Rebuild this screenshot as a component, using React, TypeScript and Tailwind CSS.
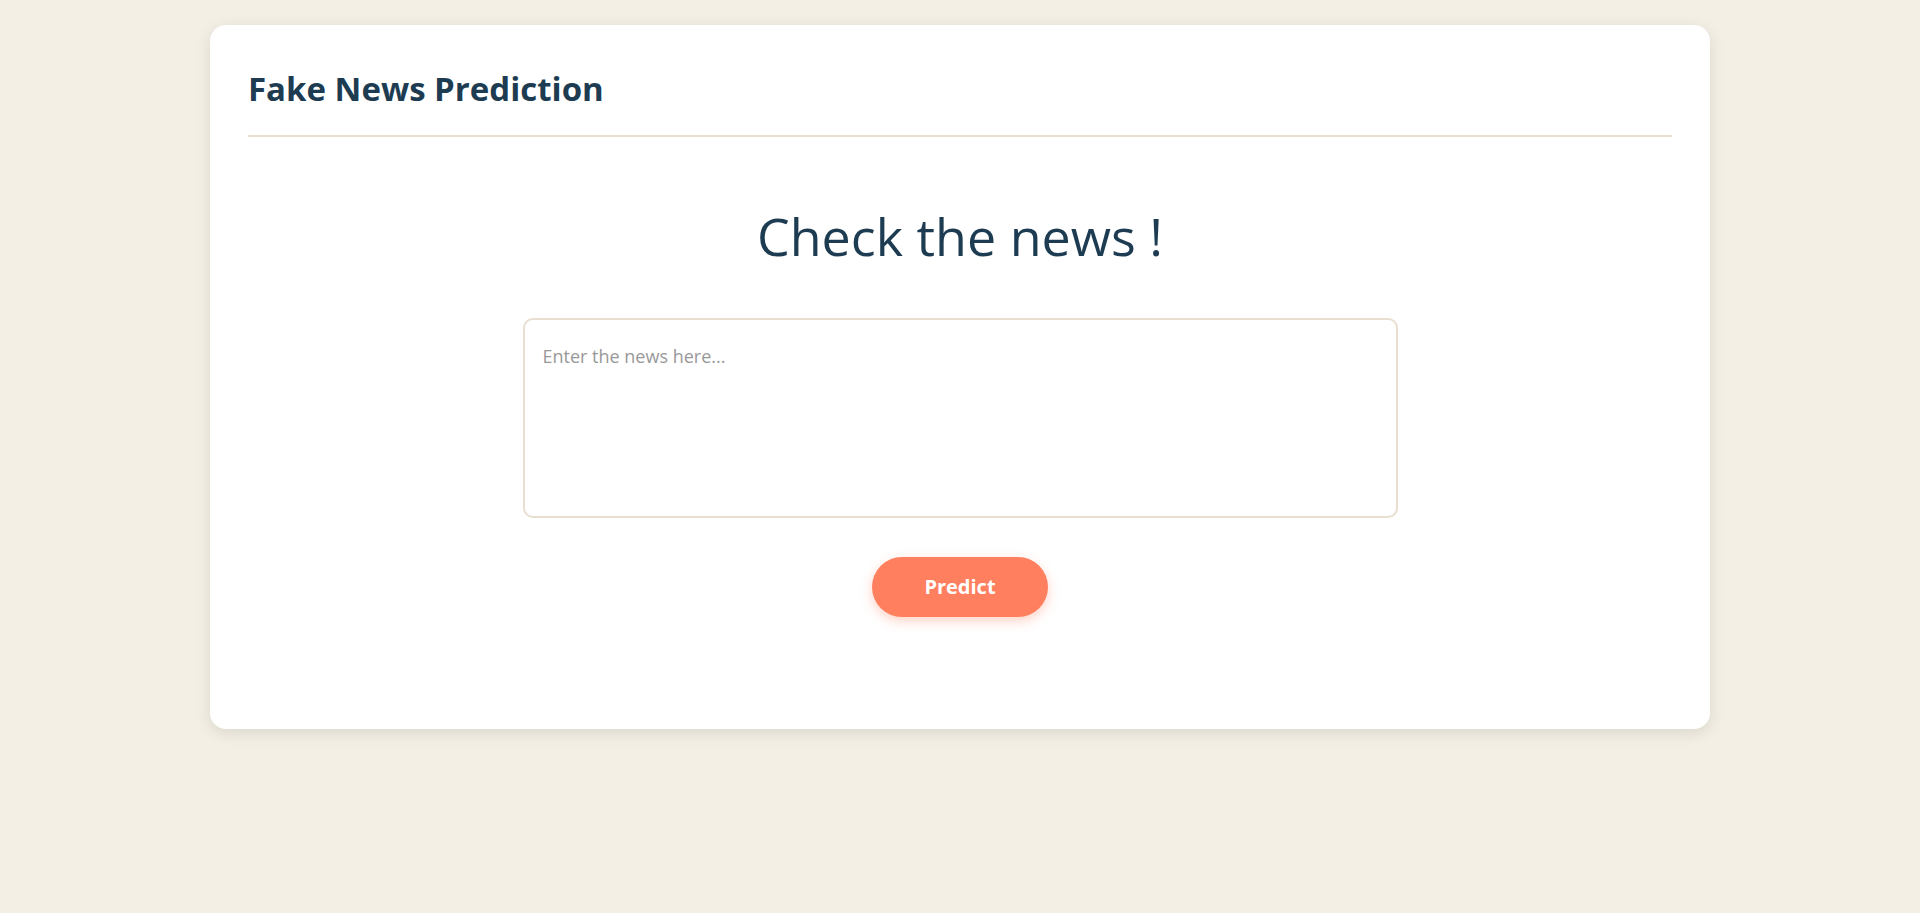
import { useState } from "react";

export default function App() {
  const [news, setNews] = useState("");

  return (
    <div
      className="min-h-screen bg-[#f3efe4] pt-[25px]"
      style={{ fontFamily: '"Open Sans", "Noto Sans", sans-serif' }}
    >
      <div className="mx-auto w-[1500px] rounded-2xl bg-white px-[38px] pt-[38px] pb-[112px] shadow-[0_4px_16px_rgba(0,0,0,0.1)]">
        {/* Header */}
        <div className="border-b-2 border-[#e8dfd0] pb-[20px]">
          <h1 className="text-[33px] font-bold leading-[52px] text-[#1d3c52]">
            Fake News Prediction
          </h1>
        </div>

        {/* Body */}
        <div className="flex flex-col items-center pt-[63px]">
          <h2 className="text-[52px] font-normal leading-[72px] text-[#1d3c52]">
            Check the news !
          </h2>

          <textarea
            value={news}
            onChange={(e) => setNews(e.target.value)}
            placeholder="Enter the news here..."
            className="mt-[46px] h-[200px] w-[875px] resize-none rounded-[10px] border-2 border-[#e8dfd0] px-[18px] pt-[23px] pb-[16px] text-[18px] text-[#1d3c52] outline-none placeholder:text-[#999]"
          />

          <button className="mt-[39px] h-[60px] w-[176px] rounded-full bg-[#ff7f5f] text-[20px] font-bold text-white shadow-[0_4px_12px_rgba(255,127,95,0.35)]">
            Predict
          </button>
        </div>
      </div>
    </div>
  );
}
